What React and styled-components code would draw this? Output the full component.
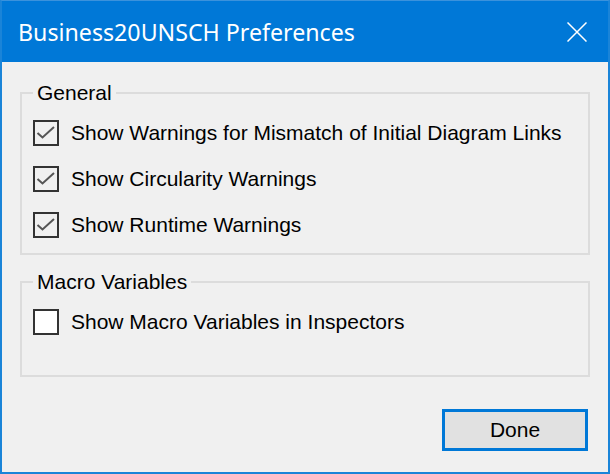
import styled, { createGlobalStyle } from "styled-components";

const GlobalStyle = createGlobalStyle`
	html, body {
		margin: 0;
		padding: 0;
		background: #f0f0f0;
	}
	* {
		box-sizing: border-box;
	}
`;

const options = [
	{ label: "Show Warnings for Mismatch of Initial Diagram Links", checked: true },
	{ label: "Show Circularity Warnings", checked: true },
	{ label: "Show Runtime Warnings", checked: true },
];

const CheckMark = () => (
	<svg width="22" height="22" viewBox="0 0 22 22">
		<polyline
			points="2.5,11 7.5,15.5 19,5"
			fill="none"
			stroke="#555"
			strokeWidth="2"
		/>
	</svg>
);

const CloseIcon = () => (
	<svg width="20" height="20" viewBox="0 0 20 20">
		<path d="M0.5 0.5 L19.5 19.5 M19.5 0.5 L0.5 19.5" stroke="#fff" strokeWidth="1.5" />
	</svg>
);

const Option = ({ label, checked }) => (
	<Row>
		<Box $checked={checked}>{checked && <CheckMark />}</Box>
		<Label>{label}</Label>
	</Row>
);

const App = () => {
	return (
		<>
			<GlobalStyle />
			<Window>
				<TitleBar>
					<Title>Business20UNSCH Preferences</Title>
					<CloseButton>
						<CloseIcon />
					</CloseButton>
				</TitleBar>
				<Body>
					<Group $bottom={15}>
						<Legend>General</Legend>
						{options.map((o) => (
							<Option key={o.label} {...o} />
						))}
					</Group>
					<Group $bottom={40}>
						<Legend>Macro Variables</Legend>
						<Option label="Show Macro Variables in Inspectors" checked={false} />
					</Group>
					<Footer>
						<DoneButton>Done</DoneButton>
					</Footer>
				</Body>
			</Window>
		</>
	);
};

export default App;

const Window = styled.div`
	width: 610px;
	height: 474px;
	display: flex;
	flex-direction: column;
	border: 2px solid #1a84d8;
	border-top: 1px solid #3b92dc;
	background: #f0f0f0;
	font-family: "Liberation Sans", Arial, sans-serif;
`;

const TitleBar = styled.div`
	height: 61px;
	flex: none;
	display: flex;
	align-items: center;
	justify-content: space-between;
	background: #0078d7;
	padding: 0 21px 0 16px;
`;

const Title = styled.div`
	color: #fff;
	font-family: "Noto Sans", "Open Sans", sans-serif;
	font-size: 23.2px;
	margin-top: 1px;
`;

const CloseButton = styled.div`
	width: 20px;
	height: 20px;
	display: flex;
	margin-top: 1px;
`;

const Body = styled.div`
	flex: 1;
	display: flex;
	flex-direction: column;
	padding: 19px 18px 0 18px;
	gap: 15px;
`;

const Group = styled.fieldset`
	margin: 0;
	border: 2px solid #dcdcdc;
	padding: 15px 12px ${(p) => p.$bottom}px 11px;
	display: flex;
	flex-direction: column;
	gap: 20px;
`;

const Legend = styled.legend`
	padding: 0 4px;
	margin: 0;
	font-size: 21px;
	line-height: 24px;
	color: #000;
`;

const Row = styled.div`
	display: flex;
	align-items: center;
	height: 26px;
	gap: 12px;
`;

const Box = styled.div`
	width: 26px;
	height: 26px;
	flex: none;
	border: 2px solid #333;
	background: ${(p) => (p.$checked ? "transparent" : "#fff")};
	display: flex;
	align-items: center;
	justify-content: center;
`;

const Label = styled.span`
	font-size: 21px;
	color: #000;
	white-space: nowrap;
`;

const Footer = styled.div`
	display: flex;
	justify-content: flex-end;
	padding-top: 17px;
`;

const DoneButton = styled.button`
	width: 146px;
	height: 42px;
	margin-right: 2px;
	border: 3px solid #0078d7;
	background: #e1e1e1;
	font-family: "Liberation Sans", Arial, sans-serif;
	font-size: 21px;
	color: #000;
	padding: 0;
`;
